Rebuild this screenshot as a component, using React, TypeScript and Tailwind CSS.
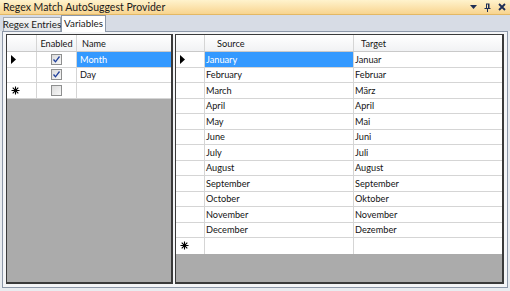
import React from "react";

const font = { fontFamily: 'Lato, "Open Sans", sans-serif' };

function Check({ checked }: { checked: boolean }) {
  return (
    <div className="w-[11px] h-[11px] border border-[#8e8f8f] bg-gradient-to-br from-[#dcdcdc] to-[#f7f7f7] flex items-center justify-center">
      {checked && (
        <svg width="9" height="9" viewBox="0 0 9 9">
          <path d="M1.5 4.5 L3.5 6.8 L7.5 1.5" stroke="#21419c" strokeWidth="1.3" fill="none" />
        </svg>
      )}
    </div>
  );
}

function Arrow() {
  return (
    <svg width="5" height="9" viewBox="0 0 5 9">
      <path d="M0 0 L5 4.5 L0 9 Z" fill="#000" />
    </svg>
  );
}

function Star() {
  return (
    <svg width="9" height="9" viewBox="0 0 9 9">
      <path d="M4.5 0.5 V8.5 M0.5 4.5 H8.5 M1.7 1.7 L7.3 7.3 M7.3 1.7 L1.7 7.3" stroke="#000" strokeWidth="1.1" />
      <circle cx="4.5" cy="4.5" r="1.6" fill="#000" />
    </svg>
  );
}

const rowH = "h-[15.5px]";

export default function App() {
  const months = [
    ["January", "Januar"],
    ["February", "Februar"],
    ["March", "März"],
    ["April", "April"],
    ["May", "Mai"],
    ["June", "Juni"],
    ["July", "Juli"],
    ["August", "August"],
    ["September", "September"],
    ["October", "Oktober"],
    ["November", "November"],
    ["December", "Dezember"],
  ];
  return (
    <div className="w-[510px] h-[291px] bg-[#e9ecf0] flex flex-col text-[9.2px] text-[#141414]" style={font}>
      {/* Title bar */}
      <div className="h-[15px] bg-gradient-to-b from-[#fff3cd] to-[#f8d48e] border-b border-[#e3b865] flex items-center justify-between pl-[3px] pr-[4px]">
        <span className="text-[#1a1a1a] leading-none text-[10.5px]">Regex Match AutoSuggest Provider</span>
        <div className="flex items-center gap-[7px] text-[#1e2e55]">
          <svg width="7" height="4" viewBox="0 0 7 4"><path d="M0 0 H7 L3.5 4 Z" fill="#1e2e55" /></svg>
          <svg width="7" height="9" viewBox="0 0 7 9"><path d="M2 0.5 H5.5 V5 H6.5 V6 H4 V9 H3 V6 H0.5 V5 H2 Z M3 1.5 V5 H4 V1.5 Z" fill="#1e2e55" /></svg>
          <svg width="8" height="8" viewBox="0 0 8 8"><path d="M1 1 L7 7 M7 1 L1 7" stroke="#1e2e55" strokeWidth="1.8" /></svg>
        </div>
      </div>
      {/* Tab strip */}
      <div className="h-[16px] bg-[#d7dce5] flex items-end pl-[3px] relative z-10 text-[9.8px]">
        <div className="h-[14px] w-[58px] border border-b-0 border-[#a5acb5] bg-gradient-to-b from-[#f7f7f7] to-[#e1e4e8] flex items-center justify-center leading-none text-[#1a1a1a] whitespace-nowrap">
          Regex Entries
        </div>
        <div className="h-[17px] w-[45px] -mb-px border border-b-0 border-[#8c97a8] bg-white flex items-center justify-center leading-none text-[#1a1a1a] whitespace-nowrap">
          Variables
        </div>
      </div>
      {/* Content panel */}
      <div className="flex-1 mx-[2px] mb-[3px] border border-[#8c97a8] bg-[#f4f5f7] flex gap-[2px] p-[3px] pt-[2px]">
        {/* Left grid */}
        <div className="w-[167px] border border-[#3a3a3a] border-r-2 border-b-2 bg-[#ababab] flex flex-col">
          <div className="flex h-[17px] border-b border-[#c9c9c9] bg-gradient-to-b from-white to-[#f1f2f4]">
            <div className="w-[30px] border-r border-[#d5d5d5]" />
            <div className="w-[40px] border-r border-[#d5d5d5] flex items-center justify-center pt-[1px]">Enabled</div>
            <div className="flex-1 flex items-center pl-[5px] pt-[1px]">Name</div>
          </div>
          {[
            { sel: true, name: "Month", checked: true, head: "arrow" },
            { sel: false, name: "Day", checked: true, head: "" },
            { sel: false, name: "", checked: false, head: "star" },
          ].map((r, i) => (
            <div key={i} className={`flex ${rowH} border-b border-[#d5d5d5] bg-white`}>
              <div className="w-[30px] border-r border-[#d5d5d5] flex items-center pl-[4px]">
                {r.head === "arrow" && <Arrow />}
                {r.head === "star" && <Star />}
              </div>
              <div className="w-[40px] border-r border-[#d5d5d5] flex items-center justify-center">
                <Check checked={r.checked} />
              </div>
              <div className={`flex-1 flex items-center pl-[3px] pt-[1px] ${r.sel ? "bg-[#3399ff] text-white" : ""}`}>{r.name}</div>
            </div>
          ))}
        </div>
        {/* Right grid */}
        <div className="flex-1 border border-[#3a3a3a] border-r-2 border-b-2 bg-[#ababab] flex flex-col">
          <div className="flex h-[17px] border-b border-[#c9c9c9] bg-gradient-to-b from-white to-[#f1f2f4]">
            <div className="w-[29px] border-r border-[#d5d5d5]" />
            <div className="w-[149px] border-r border-[#d5d5d5] flex items-center pl-[12px] pt-[1px]">Source</div>
            <div className="flex-1 flex items-center pl-[7px] pt-[1px]">Target</div>
          </div>
          {months.map(([s, t], i) => (
            <div key={i} className={`flex ${rowH} border-b border-[#d5d5d5] bg-white`}>
              <div className="w-[29px] border-r border-[#d5d5d5] flex items-center pl-[4px]">
                {i === 0 && <Arrow />}
              </div>
              <div className={`w-[149px] border-r border-[#d5d5d5] flex items-center pl-[1px] pt-[1px] ${i === 0 ? "bg-[#3399ff] text-white" : ""}`}>{s}</div>
              <div className="flex-1 flex items-center pl-[1px] pt-[1px]">{t}</div>
            </div>
          ))}
          <div className={`flex ${rowH} bg-white`}>
            <div className="w-[29px] border-r border-[#d5d5d5] flex items-center pl-[4px]">
              <Star />
            </div>
            <div className="w-[149px] border-r border-[#d5d5d5]" />
            <div className="flex-1" />
          </div>
        </div>
      </div>
    </div>
  );
}
